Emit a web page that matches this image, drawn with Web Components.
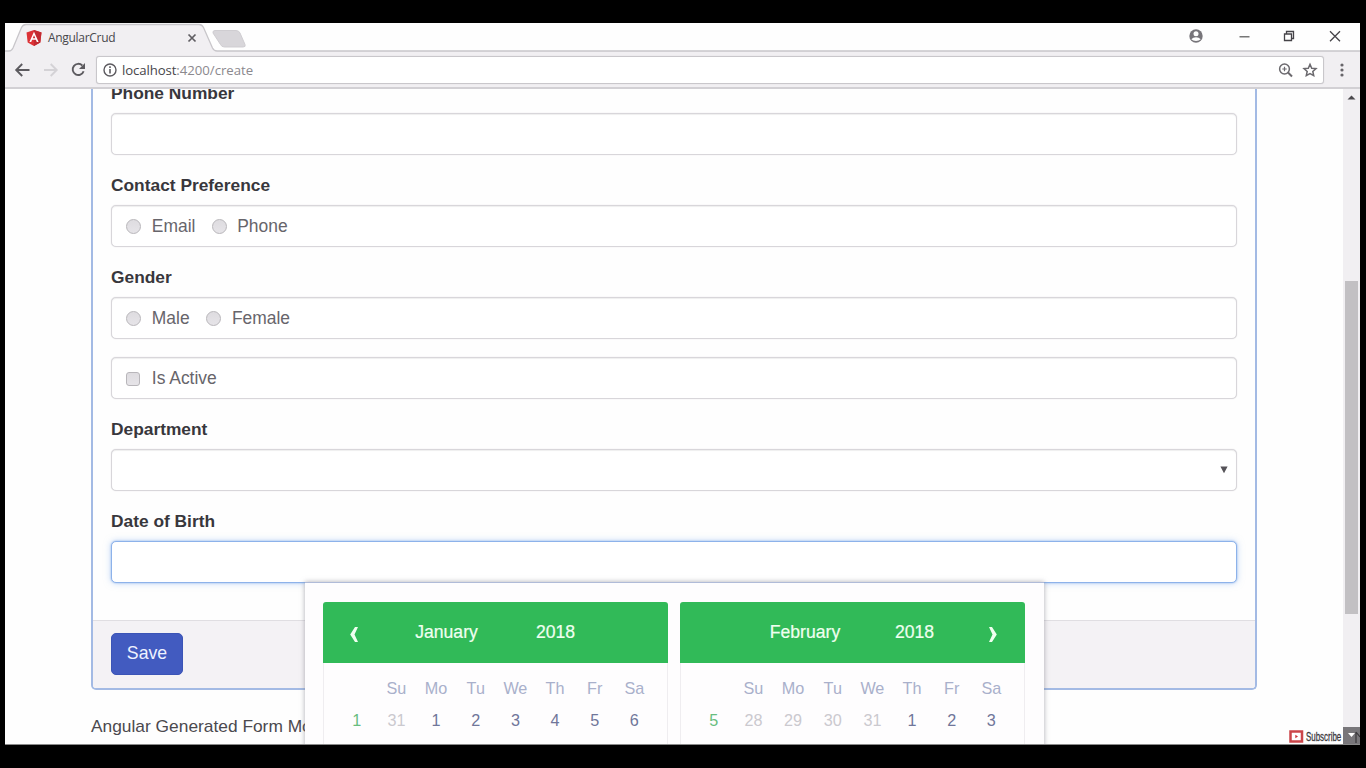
<!DOCTYPE html>
<html lang="en">
<head>
<meta charset="utf-8">
<title>AngularCrud</title>
<style>
html,body{margin:0;height:100%;background:#000;overflow:hidden}
body{font-family:"Liberation Sans",Arial,sans-serif}
</style>
</head>
<body>
<browser-window>
  <tab-strip slot="tabs" label="AngularCrud"></tab-strip>
  <address-bar slot="toolbar" host="localhost" path=":4200/create"></address-bar>
  <form-panel>
    <form-field label="Phone Number"></form-field>
    <form-field label="Contact Preference">
      <choice-item>Email</choice-item><choice-item style="margin-left:17px">Phone</choice-item>
    </form-field>
    <form-field label="Gender">
      <choice-item>Male</choice-item><choice-item style="margin-left:17.500px">Female</choice-item>
    </form-field>
    <form-field><choice-item kind="check">Is Active</choice-item></form-field>
    <form-field label="Department" class="select"></form-field>
    <form-field label="Date of Birth" class="focus"></form-field>
    <save-button slot="footer">Save</save-button>
  </form-panel>
  <page-note>Angular Generated Form Model</page-note>
  <date-popup slot="overlay">
    <month-view month="January" year="2018" nav="prev" days="1,31,1,2,3,4,5,6" muted="1"></month-view>
    <month-view month="February" year="2018" nav="next" days="5,28,29,30,31,1,2,3" muted="4"></month-view>
  </date-popup>
  <scroll-bar slot="scroll"></scroll-bar>
  <subscribe-badge slot="overlay"></subscribe-badge>
</browser-window>
<script>
function element(name, html, setup) {
  customElements.define(name, class extends HTMLElement {
    constructor() {
      super();
      this.attachShadow({mode: 'open'}).innerHTML = html;
    }
    connectedCallback() { if (setup) setup(this, this.shadowRoot); }
  });
}

element('browser-window', `<style>
:host{display:flex;flex-direction:column;position:relative;box-sizing:border-box;width:1355px;height:722px;margin:23px 0 0 5px;background:#fefefe;border-bottom:1px solid #8a8a8a;overflow:hidden}
.view{flex:1;min-height:0;display:flex;overflow:hidden}
.page{flex:1;min-width:0;padding:0 86px;overflow:hidden}
</style><slot name="tabs"></slot><slot name="toolbar"></slot>
<div class="view"><div class="page"><slot></slot></div><slot name="scroll"></slot></div><slot name="overlay"></slot>`);

element('tab-strip', `<style>
:host{display:block;height:28px;position:relative;background:#fefefe}
.bg{display:block;position:absolute;inset:0}
.row{position:relative;display:flex;align-items:center;height:28px;padding:1px 0 0 21px;color:#48474c;font:12px/28px "Open Sans",sans-serif}
.row span{margin-left:6px;width:139px;letter-spacing:-.3px}
.win{position:absolute;top:0;right:0;height:27px;width:180px}
svg{flex:none}
</style>
<svg class="bg" width="1355" height="29"><path d="M0 28.500H4Q6.500 28 8 25L16.500 4.500Q18 1.500 21 1.500H194Q197 1.500 198.500 4.500L207.500 25Q209 28.500 212 28.500H1355V29H0Z" fill="#f1eff2"/><path d="M0 28H4Q6.500 28 8 25L16.500 4.500Q18 1.500 21 1.500H194Q197 1.500 198.500 4.500L207.500 25Q209 28 212 28H1355" fill="none" stroke="#c8c6ca" stroke-width="1.300"/><path d="M210 7.500H231Q234 7.500 235 10L240 21.500Q241 24 238 24H219.500Q216.500 24 215.500 21.500L208 10Q207.500 7.500 210 7.500Z" fill="#d8d6da" stroke="#cfcdd1"/></svg>
<div class="row">
<svg width="16" height="16" viewBox="0 0 16 16"><path d="M8 0L15.500 2.600 14.300 12.500 8 16 1.700 12.500.5 2.600Z" fill="#dc3236"/><path d="M8 0L15.500 2.600 14.300 12.500 8 16Z" fill="#c22a31"/><path d="M8 1.800L3.400 12H5.200L6.100 9.700H9.900L10.800 12H12.600ZM8 5.200L9.300 8.200H6.700Z" fill="#fff"/></svg>
<span class="title"></span>
<svg width="10" height="10"><path d="M1.500 1.500L8.500 8.500M8.500 1.500L1.500 8.500" stroke="#5f5d62" stroke-width="1.700"/></svg>
</div>
<div class="win">
<svg width="180" height="27"><circle cx="16" cy="13" r="6.700" fill="#77757a"/><circle cx="16" cy="10.700" r="2.500" fill="#fff"/><path d="M11.300 16.200Q13 14.200 16 14.200T20.700 16.200Q19 18 16 18T11.300 16.200Z" fill="#fff"/><path d="M59.500 13.800H69.500" stroke="#555" stroke-width="1.200"/><path d="M104.500 11H111.500V17.500H104.500ZM106.500 10.500V8.500H113.500V15.500H112" fill="none" stroke="#454348" stroke-width="1.300"/><path d="M150 8.200L160 18.200M160 8.200L150 18.200" stroke="#454348" stroke-width="1.300"/></svg></div>`,
(el, root) => { root.querySelector('.title').textContent = el.getAttribute('label'); });

element('address-bar', `<style>
:host{display:flex;align-items:center;box-sizing:border-box;height:38px;background:#f1eff2;border-bottom:2px solid #d2d0d4;padding-top:1px;padding-left:7px}
.box{display:flex;align-items:center;box-sizing:border-box;width:1228px;height:28px;background:#fff;border:1px solid #c9c7cb;box-shadow:0 0 1px #c9c7cb;border-radius:3px;padding:0 6px;font:13.200px/26px "Open Sans",sans-serif;color:#47464a}
.path{color:#8b898e;flex:1;letter-spacing:-.02px}.text{margin-left:5px;letter-spacing:-.1px}
.right{margin-right:-3px}
svg{flex:none}
</style>
<svg width="84" height="28"><g fill="none" stroke="#5c5a5f" stroke-width="1.900"><path d="M17.500 14H4.500M10.200 8L4.200 14L10.200 20"/><path d="M32 14H44M38.700 8L44.700 14L38.700 20" stroke="#d4d2d6"/><path d="M70.300 9.500A5.600 5.600 0 1 0 71.600 15.200"/></g><path d="M73 7V13H67Z" fill="#5c5a5f"/></svg>
<div class="box"><svg width="14" height="14"><circle cx="7" cy="7" r="6" fill="none" stroke="#5c5a5f" stroke-width="1.400"/><path d="M7 6V10.500M7 3.300V4.900" stroke="#5c5a5f" stroke-width="1.600"/></svg>
<span class="text"></span><span class="path"></span>
<svg class="right" width="42" height="20"><g fill="none" stroke="#6b696e" stroke-width="1.500"><circle cx="6.500" cy="9" r="4.900"/><path d="M10 12.500L14 16.500" stroke-width="2"/><path d="M4.300 9H8.700M6.500 6.800V11.200" stroke-width="1.200"/><path d="M32 4.300L33.700 8.200 38 8.600 34.800 11.500 35.700 15.600 32 13.500 28.300 15.600 29.200 11.500 26 8.600 30.300 8.200Z" stroke-width="1.500"/></g></svg></div>
<svg width="34" height="28"><g fill="#67656a"><circle cx="18" cy="9" r="1.600"/><circle cx="18" cy="14" r="1.600"/><circle cx="18" cy="19" r="1.600"/></g></svg>`,
(el, root) => {
  root.querySelector('.text').textContent = el.getAttribute('host');
  root.querySelector('.path').textContent = el.getAttribute('path');
});

element('form-panel', `<style>
:host{display:block;box-sizing:border-box;width:1166px;height:601px;border:2px solid #a3bae4;border-top:0;border-radius:0 0 5px 5px;overflow:hidden}
.body{box-sizing:border-box;height:531px;padding:0 18px;overflow:hidden}
.fields{margin-top:-25.700px}
.foot{box-sizing:border-box;height:68px;background:#f4f2f5;border-top:1px solid #e0dee2;padding:12px 17.500px}
</style><div class="body"><div class="fields"><slot></slot></div></div><div class="foot"><slot name="footer"></slot></div>`);

element('form-field', `<style>
:host{display:block}
label{display:block;height:31px;line-height:22px;margin-top:18.900px;font-size:17.350px;font-weight:700;color:#38373c;white-space:nowrap}
label[hidden]{display:block;height:0;overflow:hidden}
.box{box-sizing:border-box;height:41.850px;border:1px solid #d8d6da;border-radius:5px;background:#fff;display:flex;align-items:center;padding:0 15px;box-shadow:0 0 1px #d0ced2,inset 0 1px 1px #0001}
:host(.focus) .box{border-color:#8db2ea;box-shadow:0 0 2px #8db2ea,0 0 7px #8ab4ee88}
.arrow{display:none;margin-left:auto;margin-right:-7px}
:host(.select) .arrow{display:block}
</style><label></label><div class="box"><slot></slot><svg class="arrow" width="8" height="8"><path d="M.4 .5H7.600L4 7.200Z" fill="#555358"/></svg></div>`,
(el, root) => {
  const label = root.querySelector('label');
  label.textContent = el.getAttribute('label') || '';
  label.hidden = !el.hasAttribute('label');
});

element('choice-item', `<style>
:host{display:flex;align-items:center;font-size:17.450px;line-height:24px;color:#67656b;white-space:nowrap}
i{box-sizing:border-box;width:15px;height:15px;border:1px solid #b8b6ba;border-radius:50%;background:linear-gradient(#dedce0,#e6e4e8);margin:2px 10.500px 0 -.7px}
:host([kind=check]) i{width:14px;height:14px;border-radius:3px;margin-right:11.500px;margin-top:1px}
</style><i></i><span><slot></slot></span>`);

element('save-button', `<style>
:host{display:flex;align-items:center;justify-content:center;box-sizing:border-box;width:72px;height:42px;border-radius:5px;background:#425bc0;border:1px solid #3b54b6;color:#eef2ff;font-size:17.700px;padding:0 0 1px 1px}
</style><slot></slot>`);

element('page-note', `<style>
:host{display:block;margin-top:24px;font-size:17.350px;line-height:24px;color:#4b494e;white-space:nowrap}
</style><slot></slot>`);

element('date-popup', `<style>
:host{display:flex;gap:12px;position:absolute;left:300px;top:559px;width:739px;height:170px;box-sizing:border-box;padding:19px 18px 0;background:#fefdfe;box-shadow:0 0 5px #77758099;border-top:1px solid #b0bbd8}
</style><slot></slot>`);

element('month-view', `<style>
:host{display:block;width:345px;height:160px;box-sizing:border-box}
.head{display:grid;grid-template-columns:62px 123px 95px 65px;height:61px;align-items:center;justify-items:center;background:#31ba58;border-radius:3px 3px 0 0;color:#effff0;font-size:17.600px;line-height:59px}
.head span{margin-top:0;-webkit-text-stroke:.2px #effff0}
:host([nav=next]) .head{grid-template-columns:65px 120px 99px 57px 4px}
:host([nav=next]) .head svg{order:3}
:host([nav=next]) .month{grid-column:2}
.head svg{margin-top:4px}
.days{box-sizing:border-box;height:99px;border:1px solid #efedf0;border-top:0;padding:10px 13px;display:grid;grid-template-columns:repeat(8,39.650px);grid-template-rows:31px 32px;justify-items:center;align-items:center;font-size:16.200px;color:#70769a}
.wd{color:#a9b0cb}.week{color:#68bd7f}.mute{color:#cbc9cf}
</style><div class="head"><svg width="10" height="17"><path d="M1.200 8.500L6 1H9L5.500 8.500 9 16H6Z" fill="#effff0"/></svg><span class="month"></span><span class="year"></span></div><div class="days"></div>`,
(el, root) => {
  root.querySelector('.month').textContent = el.getAttribute('month');
  root.querySelector('.year').textContent = el.getAttribute('year');
  if (el.getAttribute('nav') === 'next') root.querySelector('svg').style.transform = 'scaleX(-1)';
  const muted = +el.getAttribute('muted');
  const heads = ['', 'Su', 'Mo', 'Tu', 'We', 'Th', 'Fr', 'Sa'].map(d => '<span class="wd">' + d + '</span>');
  const days = el.getAttribute('days').split(',').map((d, i) =>
    '<span class="' + (i === 0 ? 'week' : i <= muted ? 'mute' : '') + '">' + d + '</span>');
  root.querySelector('.days').innerHTML = heads.concat(days).join('');
});

element('scroll-bar', `<style>
:host{display:flex;flex-direction:column;align-items:center;width:17px;background:#f1eff2;flex:none}
.up{margin-top:4px}
.thumb{width:13px;height:333px;margin-top:180px;background:#c2c0c3}
.down{margin-top:auto;width:17px;height:17px;background:#78767a}
svg{display:block}
</style><svg class="up" width="9" height="8"><path d="M.5 6.500L4.500 2.500 8.500 6.500Z" fill="#4c4a4e"/></svg><div class="thumb"></div><svg class="down" viewBox="0 0 17 17"><path d="M5 6H12L8.500 10Z" fill="#fff"/><path d="M13 5V16M13 5L17 10" stroke="#39373a" fill="none" stroke-width="1.200"/></svg>`);

element('subscribe-badge', `<style>
:host{display:flex;align-items:center;position:absolute;left:1284px;top:706px;height:15px;color:#39373b}
span{display:block;margin-left:2px;width:36px;font:12px/14px "Liberation Sans Narrow","Liberation Sans",sans-serif;transform-origin:0 50%;transform:scaleX(.66);white-space:nowrap;-webkit-text-stroke:.3px #39373b}
</style><svg width="15" height="13"><path d="M1.500 1.500H13V11.500H1.500Z" fill="#fff" stroke="#cb4549" stroke-width="2.500"/><path d="M6.300 4.800L9 6.500 6.300 8.200Z" fill="#cb3338"/></svg><span>Subscribe</span>`);
</script>
</body>
</html>
